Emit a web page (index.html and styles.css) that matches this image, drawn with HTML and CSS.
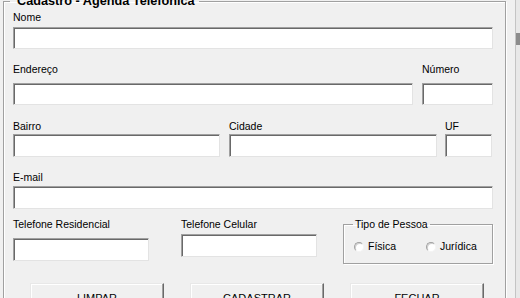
FILE: index.html
```html
<!DOCTYPE html>
<html lang="pt-BR">

<head>
    <meta charset="UTF-8">
    <title>Cadastro - Agenda Telefonica</title>
    <link rel="stylesheet" href="styles.css">
</head>

<body>
    <div class="window">
        <fieldset class="frame">
            <legend class="frame-title">Cadastro - Agenda Telefonica</legend>

            <div class="row row-nome">
                <div class="field grow">
                    <label>Nome</label>
                    <input type="text" class="gap-3">
                </div>
            </div>

            <div class="row row-endereco">
                <div class="field endereco">
                    <label>Endereço</label>
                    <input type="text" class="gap-7">
                </div>
                <div class="field numero">
                    <label>Número</label>
                    <input type="text" class="gap-7">
                </div>
            </div>

            <div class="row row-bairro">
                <div class="field bairro">
                    <label>Bairro</label>
                    <input type="text" class="gap-1 tall">
                </div>
                <div class="field cidade">
                    <label>Cidade</label>
                    <input type="text" class="gap-1 tall">
                </div>
                <div class="field uf">
                    <label>UF</label>
                    <input type="text" class="gap-1 tall">
                </div>
            </div>

            <div class="row row-email">
                <div class="field grow">
                    <label>E-mail</label>
                    <input type="text" class="gap-2 tall">
                </div>
            </div>

            <div class="row row-telefone">
                <div class="field telefone">
                    <label>Telefone Residencial</label>
                    <input type="text" class="gap-7 tall">
                </div>
                <div class="field telefone celular">
                    <label>Telefone Celular</label>
                    <input type="text" class="gap-3 tall">
                </div>
                <fieldset class="tipo">
                    <legend>Tipo de Pessoa</legend>
                    <div class="options">
                        <label class="option"><span class="radio"></span>Física</label>
                        <label class="option"><span class="radio"></span>Jurídica</label>
                    </div>
                </fieldset>
            </div>

            <div class="actions">
                <button class="button">LIMPAR</button>
                <button class="button">CADASTRAR</button>
                <button class="button">FECHAR</button>
            </div>
        </fieldset>
    </div>
    <div class="scrollbar">
        <div class="thumb"></div>
    </div>
</body>

</html>
```

FILE: styles.css
```css
body {
    font-family: 'Liberation Sans', Arial, sans-serif;
    font-size: 10.5px;
    color: #000;
    background-color: #f0f0f0;
    margin: 0;
    height: 298px;
    overflow: hidden;
    display: flex;
}

.window {
    width: 515px;
    flex: none;
}

.frame {
    box-sizing: border-box;
    width: 503px;
    margin: -6px 0 0 3px;
    padding: 0 12px 60px 9px;
    border: 1px solid #a0a0a0;
    box-shadow: inset 1px 1px #fff, 1px 1px #fff;
    min-width: 0;
}

.frame-title {
    font-size: 12.7px;
    font-weight: bold;
    line-height: 14px;
    padding: 0 4px 0 7px;
    margin-left: -3px;
}

.row {
    display: flex;
    align-items: flex-start;
}

.row-nome {
    margin-top: 3px;
}

.row-endereco {
    margin-top: 14px;
    gap: 9px;
}

.row-bairro {
    margin-top: 15px;
}

.row-email {
    margin-top: 14px;
}

.row-telefone {
    margin-top: 9px;
}

.field {
    display: flex;
    flex-direction: column;
}

.field label {
    line-height: 13px;
    white-space: nowrap;
}

.field input {
    box-sizing: border-box;
    height: 22px;
    margin: 0;
    padding: 0 3px;
    background: #fff;
    border: 1px solid;
    border-color: #a0a0a0 #e3e3e3 #e3e3e3 #a0a0a0;
    box-shadow: inset 1px 1px #696969;
    font: inherit;
    outline: none;
}

.field input.tall {
    height: 23px;
}

.gap-1 { margin-top: 1px !important; }
.gap-2 { margin-top: 2px !important; }
.gap-3 { margin-top: 3px !important; }
.gap-7 { margin-top: 7px !important; }

.grow {
    flex: 1;
}

.endereco {
    width: 400px;
}

.numero {
    width: 71px;
}

.bairro {
    width: 207px;
}

.cidade {
    width: 208px;
    margin-left: 9px;
}

.uf {
    width: 47px;
    margin-left: 8px;
}

.telefone {
    width: 136px;
}

.celular {
    margin-left: 32px;
}

.tipo {
    box-sizing: border-box;
    width: 150px;
    height: 46px;
    margin: 0 0 0 26px;
    padding: 0 9px;
    border: 1px solid #a0a0a0;
    box-shadow: inset 1px 1px #fff, 1px 1px #fff;
    min-width: 0;
}

.tipo legend {
    line-height: 13px;
    padding: 0 2px;
}

.options {
    display: grid;
    grid-template-columns: 72px auto;
    padding-top: 9px;
    margin-left: 1px;
}

.option {
    display: flex;
    align-items: center;
    line-height: 13px;
}

.radio {
    box-sizing: border-box;
    width: 10px;
    height: 10px;
    margin-right: 4px;
    border-radius: 50%;
    background: #fff;
    border: 1px solid;
    border-color: #a0a0a0 #f4f4f4 #f4f4f4 #a0a0a0;
    box-shadow: inset 1px 1px #d0d0d0;
}

.actions {
    display: flex;
    margin: 19px 0 0 17px;
    gap: 26px;
}

.button {
    box-sizing: border-box;
    width: 134px;
    height: 30px;
    padding: 0;
    font: inherit;
    font-size: 11px;
    color: #000;
    background-color: #f0f0f0;
    border: 1px solid;
    border-color: #e8e8e8 #696969 #696969 #e8e8e8;
    box-shadow: inset -1px -1px #a0a0a0, inset 1px 1px #fff;
}

.scrollbar {
    flex: 1;
    background-color: #e8e8e8;
    border-left: 1px solid #c4c4c4;
}

.thumb {
    margin-top: 33px;
    height: 12px;
    background-color: #8c8c8c;
}
```
